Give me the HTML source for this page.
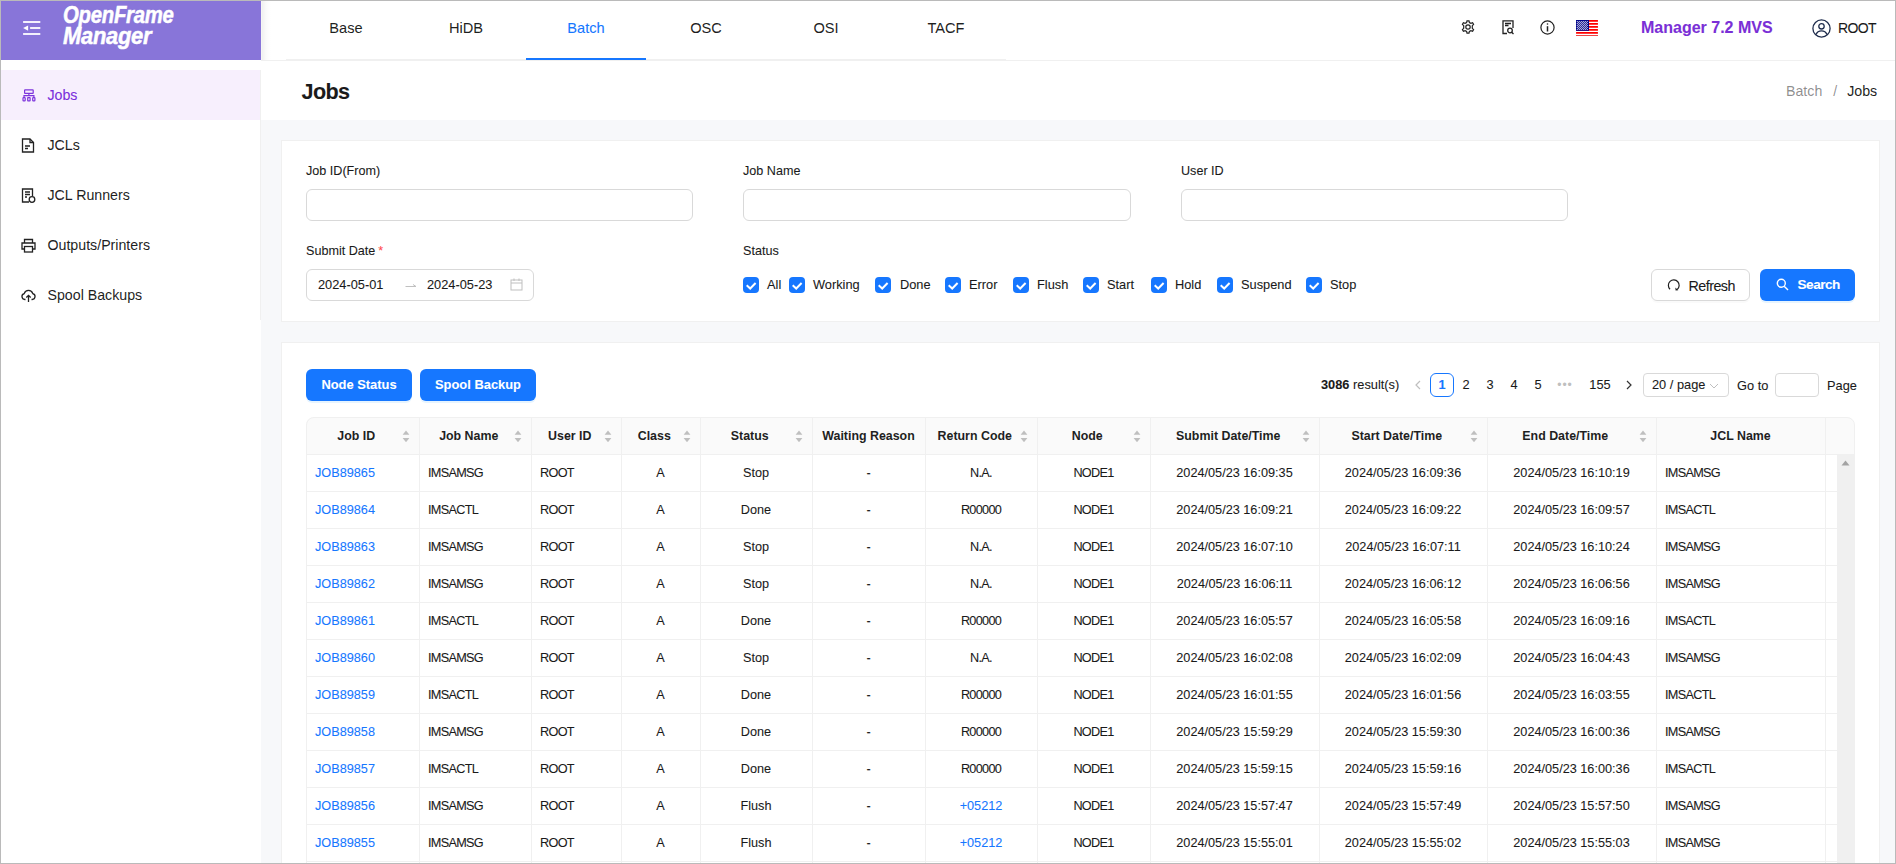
<!DOCTYPE html>
<html><head><meta charset="utf-8">
<style>
*{box-sizing:border-box;margin:0;padding:0}
html,body{width:1896px;height:864px;overflow:hidden;background:#fff}
body{position:relative;font-family:"Liberation Sans",sans-serif;color:#1a1a1a;-webkit-text-stroke:0.08px currentColor}
.abs{position:absolute}
.logo{color:#fff;font-weight:bold;font-style:italic;font-size:23.5px;line-height:24px;transform-origin:0 0;letter-spacing:-0.3px;-webkit-text-stroke:0.5px #fff;white-space:nowrap}
#frame{position:absolute;left:0;top:0;width:1896px;height:864px;border:1px solid #bababa;pointer-events:none;z-index:100}
#logo{position:absolute;left:1px;top:1px;width:260px;height:59px;background:#8875d9}
#side{position:absolute;left:1px;top:60px;width:260px;height:804px;background:#fff}
#sideb{position:absolute;left:260px;top:70px;width:1px;height:250px;background:#f0f0f0}
.mi{position:absolute;left:0;width:259px;height:50px;font-size:14.2px;line-height:50px;color:rgba(0,0,0,0.88)}
.mi span{position:absolute;left:46.5px;top:0}
.mi svg{position:absolute;left:20px;top:18px}
.mi.sel{background:#f7effd;color:#7a2edb}
#hdr{position:absolute;left:261px;top:1px;width:1634px;height:60px;background:#fff;border-bottom:1px solid #f0f0f0}
.tab{position:absolute;top:0;width:120px;height:58px;line-height:54px;text-align:center;font-size:14.6px;color:rgba(0,0,0,0.88)}
.tab.act{color:#1677ff}
#title{position:absolute;left:261px;top:61px;width:1634px;height:59px;background:#fff}
#main{position:absolute;left:261px;top:120px;width:1634px;height:743px;background:#f7f8fa}
.card{position:absolute;left:281px;width:1599px;background:#fff;border:1px solid #f0f0f0}
.lbl{position:absolute;font-size:12.6px;line-height:16px;margin-top:1px}
.inp{position:absolute;height:32px;border:1px solid #d9d9d9;border-radius:6px;background:#fff}
.cb{position:absolute;top:277px;width:16px;height:16px;border-radius:4px;background:#1677ff}
.cb svg{position:absolute;left:0;top:0}
.cbl{position:absolute;top:277px;line-height:16px;font-size:12.8px}
.btn{position:absolute;height:32px;border-radius:6px;font-size:13px;line-height:30px;text-align:center}
.btnp{background:#1677ff;color:#fff;font-weight:bold;box-shadow:0 2px 0 rgba(5,145,255,0.1)}
#tbl{position:absolute;left:306px;top:417px;width:1548px;height:447px;overflow:hidden;border-radius:8px 8px 0 0}
#tblb{position:absolute;left:306px;top:417px;width:1549px;height:460px;border-radius:8px 8px 0 0;border:1px solid #f0f0f0;pointer-events:none}
.thbg{position:absolute;left:0;top:0;width:1548px;height:38px;background:#fafafa;border-bottom:1px solid #f0f0f0}
.th{position:absolute;top:1px;height:36px;line-height:36px;text-align:center;font-weight:bold;font-size:12.4px;color:rgba(0,0,0,0.88)}
.sort{position:absolute;top:13px}
.vl{position:absolute;top:0;width:1px;height:447px;background:#f0f0f0}
.hl{position:absolute;left:0;width:1531px;height:1px;background:#f0f0f0}
.td{position:absolute;height:36px;line-height:36px;font-size:12.7px;white-space:nowrap;padding:0 9px}
.td.c{text-align:center;padding:0}
.link{color:#1677ff}
.nm{letter-spacing:-0.7px}
</style></head><body>
<div id="frame"></div>
<div id="logo">
  <svg class="abs" style="left:22px;top:20px" width="18" height="15" viewBox="0 0 18 15"><rect x="0.1" y="0.1" width="17.2" height="1.8" fill="#fff"/><rect x="7.1" y="6.1" width="10.2" height="1.8" fill="#fff"/><rect x="0.1" y="12.1" width="17.2" height="1.8" fill="#fff"/><path d="M0.1 7.1L5.1 4.6V9.8Z" fill="#fff"/></svg>
  <div class="abs logo" style="left:61.5px;top:1.5px;transform:scaleX(0.865)">OpenFrame</div><div class="abs logo" style="left:61.5px;top:23px;transform:scaleX(0.933)">Manager</div>
</div>
<div id="side">
  <div class="mi sel" style="top:10px"><svg style="left:21px;top:19px" width="14" height="14" viewBox="0 0 14 14" fill="none" stroke="#7d35dc" stroke-width="1.2"><rect x="2.6" y="0.8" width="8.6" height="3.6" rx="0.5"/><path d="M6.9 4.4V6.6M2 8.6V6.6H11.9V8.6"/><rect x="1" y="8.6" width="2.2" height="3.3" rx="0.6"/><rect x="5.7" y="8.6" width="2.4" height="3.3" rx="0.3"/><rect x="10.7" y="8.6" width="2.2" height="3.3" rx="0.6"/></svg><span>Jobs</span></div>
  <div class="mi" style="top:60px"><svg width="14" height="15" viewBox="0 0 14 15" fill="none" stroke="#222" stroke-width="1.3"><path d="M1.5 1H9L12.5 4.5V14H1.5Z"/><path d="M9 1V4.5H12.5M4 8H9M4 10.5H7"/></svg><span>JCLs</span></div>
  <div class="mi" style="top:110px"><svg width="15" height="15" viewBox="0 0 15 15" fill="none" stroke="#222" stroke-width="1.3"><path d="M8 14H1.5V1H11.5V8"/><path d="M4 4H9M4 6.5H9M4 9H6"/><circle cx="11" cy="11.5" r="2.8"/></svg><span>JCL Runners</span></div>
  <div class="mi" style="top:160px"><svg width="15" height="15" viewBox="0 0 15 15" fill="none" stroke="#222" stroke-width="1.3"><path d="M3.5 5V1.5H11.5V5M3.5 11H1V5H14V11H11.5"/><rect x="3.5" y="8.5" width="8" height="5.5"/></svg><span>Outputs/Printers</span></div>
  <div class="mi" style="top:210px"><svg width="15" height="15" viewBox="0 0 15 15" fill="none" stroke="#222" stroke-width="1.3"><path d="M4.5 11.5H3.8A3 3 0 0 1 3.2 5.6A4.5 4.5 0 0 1 11.8 5.6A3 3 0 0 1 11.2 11.5H10.5"/><path d="M7.5 14V7.5M5.3 9.5L7.5 7.3L9.7 9.5"/></svg><span>Spool Backups</span></div>
</div>
<div id="sideb"></div>
<div id="hdr">
  <div class="abs" style="left:25px;top:58px;width:720px;height:1px;background:#f0f0f0"></div>
  <div class="tab" style="left:25px">Base</div>
  <div class="tab" style="left:145px">HiDB</div>
  <div class="tab act" style="left:265px">Batch</div>
  <div class="abs" style="left:265px;top:57px;width:120px;height:2px;background:#1677ff"></div>
  <div class="tab" style="left:385px">OSC</div>
  <div class="tab" style="left:505px">OSI</div>
  <div class="tab" style="left:625px">TACF</div>
  <svg class="abs" style="left:1200px;top:19px" width="14" height="14" viewBox="0 0 14 14" fill="none" stroke="#222" stroke-width="1.2"><circle cx="7" cy="7" r="2.2"/><path d="M6 0.8H8L8.4 2.6L9.9 3.4L11.6 2.7L12.6 4.4L11.3 5.7V8.3L12.6 9.6L11.6 11.3L9.9 10.6L8.4 11.4L8 13.2H6L5.6 11.4L4.1 10.6L2.4 11.3L1.4 9.6L2.7 8.3V5.7L1.4 4.4L2.4 2.7L4.1 3.4L5.6 2.6Z"/></svg>
  <svg class="abs" style="left:1241px;top:19px" width="13" height="15" viewBox="0 0 13 15" fill="none" stroke="#222" stroke-width="1.3"><path d="M5 13.5H1V0.8H11V8"/><path d="M3 3.5H9M3 5.5H6.5"/><circle cx="8" cy="10.5" r="2.3"/><path d="M9.7 12.2L11.5 14"/></svg>
  <svg class="abs" style="left:1279px;top:19px" width="15" height="15" viewBox="0 0 15 15" fill="none" stroke="#222" stroke-width="1.2"><circle cx="7.5" cy="7.5" r="6.6"/><path d="M7.5 6.2V11.5" stroke-width="1.5"/><circle cx="7.5" cy="4" r="0.8" fill="#222" stroke="none"/></svg>
  <svg class="abs" style="left:1315px;top:19px" width="22" height="16" viewBox="0 0 22 16"><rect width="22" height="16" fill="#fff"/><g fill="#f00"><rect y="0.1" width="22" height="1.75" rx="0.5"/><rect y="3.1" width="22" height="1.75" rx="0.5"/><rect y="6.1" width="22" height="1.75" rx="0.5"/><rect y="9.1" width="22" height="1.75" rx="0.5"/><rect y="12.1" width="22" height="1.75" rx="0.5"/><rect y="15" width="22" height="1" fill="#e44"/></g><rect width="13" height="10.8" fill="#00048a"/><g fill="#fff" opacity="0.9"><circle cx="1.3" cy="1.5" r="0.6"/><circle cx="1.3" cy="3.5" r="0.6"/><circle cx="1.3" cy="5.5" r="0.6"/><circle cx="1.3" cy="7.5" r="0.6"/><circle cx="1.3" cy="9.5" r="0.6"/><circle cx="3.3" cy="1.5" r="0.6"/><circle cx="3.3" cy="3.5" r="0.6"/><circle cx="3.3" cy="5.5" r="0.6"/><circle cx="3.3" cy="7.5" r="0.6"/><circle cx="3.3" cy="9.5" r="0.6"/><circle cx="5.3" cy="1.5" r="0.6"/><circle cx="5.3" cy="3.5" r="0.6"/><circle cx="5.3" cy="5.5" r="0.6"/><circle cx="5.3" cy="7.5" r="0.6"/><circle cx="5.3" cy="9.5" r="0.6"/><circle cx="7.3" cy="1.5" r="0.6"/><circle cx="7.3" cy="3.5" r="0.6"/><circle cx="7.3" cy="5.5" r="0.6"/><circle cx="7.3" cy="7.5" r="0.6"/><circle cx="7.3" cy="9.5" r="0.6"/><circle cx="9.3" cy="1.5" r="0.6"/><circle cx="9.3" cy="3.5" r="0.6"/><circle cx="9.3" cy="5.5" r="0.6"/><circle cx="9.3" cy="7.5" r="0.6"/><circle cx="9.3" cy="9.5" r="0.6"/><circle cx="11.3" cy="1.5" r="0.6"/><circle cx="11.3" cy="3.5" r="0.6"/><circle cx="11.3" cy="5.5" r="0.6"/><circle cx="11.3" cy="7.5" r="0.6"/><circle cx="11.3" cy="9.5" r="0.6"/><circle cx="2.3" cy="2.5" r="0.6"/><circle cx="2.3" cy="4.5" r="0.6"/><circle cx="2.3" cy="6.5" r="0.6"/><circle cx="2.3" cy="8.5" r="0.6"/><circle cx="4.3" cy="2.5" r="0.6"/><circle cx="4.3" cy="4.5" r="0.6"/><circle cx="4.3" cy="6.5" r="0.6"/><circle cx="4.3" cy="8.5" r="0.6"/><circle cx="6.3" cy="2.5" r="0.6"/><circle cx="6.3" cy="4.5" r="0.6"/><circle cx="6.3" cy="6.5" r="0.6"/><circle cx="6.3" cy="8.5" r="0.6"/><circle cx="8.3" cy="2.5" r="0.6"/><circle cx="8.3" cy="4.5" r="0.6"/><circle cx="8.3" cy="6.5" r="0.6"/><circle cx="8.3" cy="8.5" r="0.6"/><circle cx="10.3" cy="2.5" r="0.6"/><circle cx="10.3" cy="4.5" r="0.6"/><circle cx="10.3" cy="6.5" r="0.6"/><circle cx="10.3" cy="8.5" r="0.6"/></g></svg>
  <div class="abs" style="left:1380px;top:17px;font-size:16px;line-height:20px;font-weight:bold;color:#7a2fd6">Manager 7.2 MVS</div>
  <svg class="abs" style="left:1551px;top:18px" width="19" height="19" viewBox="0 0 19 19" fill="none" stroke="#1f2d4d" stroke-width="1.3"><circle cx="9.5" cy="9.5" r="8.6"/><circle cx="9.5" cy="7.3" r="2.7"/><path d="M4 15.6C5 13 7 11.8 9.5 11.8C12 11.8 14 13 15 15.6"/></svg>
  <div class="abs" style="left:1577px;top:18px;font-size:14px;line-height:18px;letter-spacing:-0.6px">ROOT</div>
</div>
<div class="abs" style="left:261px;top:1px;width:10px;height:59px;background:linear-gradient(90deg,rgba(200,200,190,0.15) 0px,rgba(0,0,0,0.055) 1.5px,rgba(0,0,0,0.02) 5px,rgba(0,0,0,0) 10px)"></div>
<div id="title">
  <div class="abs" style="left:40.5px;top:17.5px;font-size:21.6px;line-height:26px;font-weight:bold;letter-spacing:-0.6px">Jobs</div>
  <div class="abs" style="left:1525px;top:21px;font-size:14.2px;line-height:18px;color:rgba(0,0,0,0.45)">Batch<span style="margin:0 10px 0 11px">/</span><span style="color:rgba(0,0,0,0.88)">Jobs</span></div>
</div>
<div id="main"></div>
<div class="card" style="top:140px;height:182px"></div>
<div class="card" style="top:342px;height:530px"></div>

<div class="lbl" style="left:306px;top:162px">Job ID(From)</div>
<div class="inp" style="left:306px;top:189px;width:387px"></div>
<div class="lbl" style="left:743px;top:162px">Job Name</div>
<div class="inp" style="left:743px;top:189px;width:388px"></div>
<div class="lbl" style="left:1181px;top:162px">User ID</div>
<div class="inp" style="left:1181px;top:189px;width:387px"></div>
<div class="lbl" style="left:306px;top:242px">Submit Date<span style="color:#ff4d4f;margin-left:3px">*</span></div>
<div class="inp" style="left:306px;top:269px;width:228px">
  <div class="abs" style="left:11px;top:7px;font-size:12.8px;line-height:16px">2024-05-01</div>
  <svg class="abs" style="left:98px;top:11px" width="12" height="8" viewBox="0 0 12 8"><path d="M0.5 5.5H11L8 3.5" stroke="#c0c0c0" fill="none" stroke-width="1"/></svg>
  <div class="abs" style="left:120px;top:7px;font-size:12.8px;line-height:16px">2024-05-23</div>
  <svg class="abs" style="left:203px;top:8px" width="13" height="13" viewBox="0 0 13 13" fill="none" stroke="#bfbfbf" stroke-width="1"><rect x="1" y="2" width="11" height="10"/><path d="M1 5H12M4 0.5V3M9 0.5V3"/></svg>
</div>
<div class="lbl" style="left:743px;top:242px">Status</div>
<div class="cb" style="left:743px"><svg width="16" height="16" viewBox="0 0 16 16"><path d="M3.7 8.2L7.2 11.5L12.6 6" stroke="#fff" stroke-width="2" fill="none"/></svg></div><div class="cbl" style="left:767px">All</div><div class="cb" style="left:789px"><svg width="16" height="16" viewBox="0 0 16 16"><path d="M3.7 8.2L7.2 11.5L12.6 6" stroke="#fff" stroke-width="2" fill="none"/></svg></div><div class="cbl" style="left:813px">Working</div><div class="cb" style="left:875px"><svg width="16" height="16" viewBox="0 0 16 16"><path d="M3.7 8.2L7.2 11.5L12.6 6" stroke="#fff" stroke-width="2" fill="none"/></svg></div><div class="cbl" style="left:900px">Done</div><div class="cb" style="left:945px"><svg width="16" height="16" viewBox="0 0 16 16"><path d="M3.7 8.2L7.2 11.5L12.6 6" stroke="#fff" stroke-width="2" fill="none"/></svg></div><div class="cbl" style="left:969px">Error</div><div class="cb" style="left:1013px"><svg width="16" height="16" viewBox="0 0 16 16"><path d="M3.7 8.2L7.2 11.5L12.6 6" stroke="#fff" stroke-width="2" fill="none"/></svg></div><div class="cbl" style="left:1037px">Flush</div><div class="cb" style="left:1083px"><svg width="16" height="16" viewBox="0 0 16 16"><path d="M3.7 8.2L7.2 11.5L12.6 6" stroke="#fff" stroke-width="2" fill="none"/></svg></div><div class="cbl" style="left:1107px">Start</div><div class="cb" style="left:1151px"><svg width="16" height="16" viewBox="0 0 16 16"><path d="M3.7 8.2L7.2 11.5L12.6 6" stroke="#fff" stroke-width="2" fill="none"/></svg></div><div class="cbl" style="left:1175px">Hold</div><div class="cb" style="left:1217px"><svg width="16" height="16" viewBox="0 0 16 16"><path d="M3.7 8.2L7.2 11.5L12.6 6" stroke="#fff" stroke-width="2" fill="none"/></svg></div><div class="cbl" style="left:1241px">Suspend</div><div class="cb" style="left:1306px"><svg width="16" height="16" viewBox="0 0 16 16"><path d="M3.7 8.2L7.2 11.5L12.6 6" stroke="#fff" stroke-width="2" fill="none"/></svg></div><div class="cbl" style="left:1330px">Stop</div>
<div class="btn" style="left:1651px;top:269px;width:99px;border:1px solid #d9d9d9;box-shadow:0 2px 0 rgba(0,0,0,0.02)"><svg class="abs" style="left:15px;top:9px" width="14" height="14" viewBox="0 0 14 14"><path d="M3 10.2A5.4 5.4 0 1 1 10.2 10.5" fill="none" stroke="#1f1f1f" stroke-width="1.2"/><path d="M8.3 8.4L11.3 11.3L8.6 11.6Z" fill="#1f1f1f"/></svg><span style="position:absolute;left:36.6px;top:0.5px;font-size:14.3px;letter-spacing:-0.55px">Refresh</span></div>
<div class="btn btnp" style="left:1760px;top:269px;width:95px"><svg class="abs" style="left:16px;top:9px" width="13" height="13" viewBox="0 0 13 13" fill="none" stroke="#fff" stroke-width="1.4"><circle cx="5.3" cy="5.3" r="4"/><path d="M8.2 8.2L12 12"/></svg><span style="position:absolute;left:37.5px;top:1px;font-size:13.6px;letter-spacing:-0.5px">Search</span></div>

<div class="btn btnp" style="left:306px;top:369px;width:106px;font-size:12.9px;line-height:32px">Node Status</div>
<div class="btn btnp" style="left:420px;top:369px;width:116px;font-size:12.9px;line-height:32px">Spool Backup</div>

<div class="abs" style="left:1321px;top:377px;font-size:12.8px;line-height:16px"><b>3086</b> result(s)</div>
<svg class="abs" style="left:1414px;top:380px" width="8" height="10" viewBox="0 0 8 10"><path d="M6 1L2 5L6 9" stroke="#bfbfbf" fill="none" stroke-width="1.2"/></svg>
<div class="abs" style="left:1430px;top:373px;width:24px;height:24px;border:1px solid #1677ff;border-radius:6px;color:#1677ff;font-weight:bold;font-size:12.8px;line-height:22px;text-align:center">1</div>
<div class="abs" style="left:1454px;top:373px;width:24px;line-height:24px;font-size:12.8px;text-align:center">2</div>
<div class="abs" style="left:1478px;top:373px;width:24px;line-height:24px;font-size:12.8px;text-align:center">3</div>
<div class="abs" style="left:1502px;top:373px;width:24px;line-height:24px;font-size:12.8px;text-align:center">4</div>
<div class="abs" style="left:1526px;top:373px;width:24px;line-height:24px;font-size:12.8px;text-align:center">5</div>
<div class="abs" style="left:1553px;top:373px;width:24px;line-height:24px;font-size:12px;text-align:center;color:#bfbfbf;letter-spacing:1px">•••</div>
<div class="abs" style="left:1586px;top:373px;width:28px;line-height:24px;font-size:12.8px;text-align:center">155</div>
<svg class="abs" style="left:1625px;top:380px" width="8" height="10" viewBox="0 0 8 10"><path d="M2 1L6 5L2 9" stroke="#333" fill="none" stroke-width="1.2"/></svg>
<div class="abs" style="left:1643px;top:373px;width:86px;height:24px;border:1px solid #d9d9d9;border-radius:4px;background:#fff"><span style="position:absolute;left:8px;top:3px;font-size:12.8px;line-height:16px">20 / page</span><svg class="abs" style="left:65px;top:8px" width="10" height="8" viewBox="0 0 10 8"><path d="M1 2L5 6L9 2" stroke="#bfbfbf" fill="none" stroke-width="1"/></svg></div>
<div class="abs" style="left:1737px;top:378px;font-size:12.8px;line-height:16px">Go to</div>
<div class="abs" style="left:1775px;top:373px;width:44px;height:24px;border:1px solid #d9d9d9;border-radius:4px"></div>
<div class="abs" style="left:1827px;top:378px;font-size:12.8px;line-height:16px">Page</div>

<div id="tbl">
  <div class="thbg"></div>
  <div class="th" style="left:0px;width:100.5px">Job ID</div><svg class="sort" style="left:95.5px" width="8" height="13" viewBox="0 0 8 13"><path d="M4 0.6L7.4 4.8H0.6Z" fill="#bfbfbf"/><path d="M4 12.2L7.4 8H0.6Z" fill="#bfbfbf"/></svg><div class="th" style="left:113px;width:99.5px">Job Name</div><svg class="sort" style="left:207.5px" width="8" height="13" viewBox="0 0 8 13"><path d="M4 0.6L7.4 4.8H0.6Z" fill="#bfbfbf"/><path d="M4 12.2L7.4 8H0.6Z" fill="#bfbfbf"/></svg><div class="th" style="left:225px;width:77.5px">User ID</div><svg class="sort" style="left:297.5px" width="8" height="13" viewBox="0 0 8 13"><path d="M4 0.6L7.4 4.8H0.6Z" fill="#bfbfbf"/><path d="M4 12.2L7.4 8H0.6Z" fill="#bfbfbf"/></svg><div class="th" style="left:315px;width:66.5px">Class</div><svg class="sort" style="left:376.5px" width="8" height="13" viewBox="0 0 8 13"><path d="M4 0.6L7.4 4.8H0.6Z" fill="#bfbfbf"/><path d="M4 12.2L7.4 8H0.6Z" fill="#bfbfbf"/></svg><div class="th" style="left:394px;width:99.5px">Status</div><svg class="sort" style="left:488.5px" width="8" height="13" viewBox="0 0 8 13"><path d="M4 0.6L7.4 4.8H0.6Z" fill="#bfbfbf"/><path d="M4 12.2L7.4 8H0.6Z" fill="#bfbfbf"/></svg><div class="th" style="left:506px;width:113px">Waiting Reason</div><div class="th" style="left:619px;width:99.5px">Return Code</div><svg class="sort" style="left:713.5px" width="8" height="13" viewBox="0 0 8 13"><path d="M4 0.6L7.4 4.8H0.6Z" fill="#bfbfbf"/><path d="M4 12.2L7.4 8H0.6Z" fill="#bfbfbf"/></svg><div class="th" style="left:731px;width:100.5px">Node</div><svg class="sort" style="left:826.5px" width="8" height="13" viewBox="0 0 8 13"><path d="M4 0.6L7.4 4.8H0.6Z" fill="#bfbfbf"/><path d="M4 12.2L7.4 8H0.6Z" fill="#bfbfbf"/></svg><div class="th" style="left:844px;width:156.5px">Submit Date/Time</div><svg class="sort" style="left:995.5px" width="8" height="13" viewBox="0 0 8 13"><path d="M4 0.6L7.4 4.8H0.6Z" fill="#bfbfbf"/><path d="M4 12.2L7.4 8H0.6Z" fill="#bfbfbf"/></svg><div class="th" style="left:1013px;width:155.5px">Start Date/Time</div><svg class="sort" style="left:1163.5px" width="8" height="13" viewBox="0 0 8 13"><path d="M4 0.6L7.4 4.8H0.6Z" fill="#bfbfbf"/><path d="M4 12.2L7.4 8H0.6Z" fill="#bfbfbf"/></svg><div class="th" style="left:1181px;width:156.5px">End Date/Time</div><svg class="sort" style="left:1332.5px" width="8" height="13" viewBox="0 0 8 13"><path d="M4 0.6L7.4 4.8H0.6Z" fill="#bfbfbf"/><path d="M4 12.2L7.4 8H0.6Z" fill="#bfbfbf"/></svg><div class="th" style="left:1350px;width:169px">JCL Name</div>
  <div class="vl" style="left:113px"></div><div class="vl" style="left:225px"></div><div class="vl" style="left:315px"></div><div class="vl" style="left:394px"></div><div class="vl" style="left:506px"></div><div class="vl" style="left:619px"></div><div class="vl" style="left:731px"></div><div class="vl" style="left:844px"></div><div class="vl" style="left:1013px"></div><div class="vl" style="left:1181px"></div><div class="vl" style="left:1350px"></div><div class="vl" style="left:1519px"></div>
  <div class="td l link" style="left:0px;width:113px;top:38px">JOB89865</div><div class="td l nm" style="left:113px;width:112px;top:38px">IMSAMSG</div><div class="td l nm" style="left:225px;width:90px;top:38px">ROOT</div><div class="td c " style="left:315px;width:79px;top:38px">A</div><div class="td c " style="left:394px;width:112px;top:38px">Stop</div><div class="td c " style="left:506px;width:113px;top:38px">-</div><div class="td c nm" style="left:619px;width:112px;top:38px">N.A.</div><div class="td c nm" style="left:731px;width:113px;top:38px">NODE1</div><div class="td c " style="left:844px;width:169px;top:38px">2024/05/23 16:09:35</div><div class="td c " style="left:1013px;width:168px;top:38px">2024/05/23 16:09:36</div><div class="td c " style="left:1181px;width:169px;top:38px">2024/05/23 16:10:19</div><div class="td l nm" style="left:1350px;width:169px;top:38px">IMSAMSG</div><div class="hl" style="top:74px"></div><div class="td l link" style="left:0px;width:113px;top:75px">JOB89864</div><div class="td l nm" style="left:113px;width:112px;top:75px">IMSACTL</div><div class="td l nm" style="left:225px;width:90px;top:75px">ROOT</div><div class="td c " style="left:315px;width:79px;top:75px">A</div><div class="td c " style="left:394px;width:112px;top:75px">Done</div><div class="td c " style="left:506px;width:113px;top:75px">-</div><div class="td c nm" style="left:619px;width:112px;top:75px">R00000</div><div class="td c nm" style="left:731px;width:113px;top:75px">NODE1</div><div class="td c " style="left:844px;width:169px;top:75px">2024/05/23 16:09:21</div><div class="td c " style="left:1013px;width:168px;top:75px">2024/05/23 16:09:22</div><div class="td c " style="left:1181px;width:169px;top:75px">2024/05/23 16:09:57</div><div class="td l nm" style="left:1350px;width:169px;top:75px">IMSACTL</div><div class="hl" style="top:111px"></div><div class="td l link" style="left:0px;width:113px;top:112px">JOB89863</div><div class="td l nm" style="left:113px;width:112px;top:112px">IMSAMSG</div><div class="td l nm" style="left:225px;width:90px;top:112px">ROOT</div><div class="td c " style="left:315px;width:79px;top:112px">A</div><div class="td c " style="left:394px;width:112px;top:112px">Stop</div><div class="td c " style="left:506px;width:113px;top:112px">-</div><div class="td c nm" style="left:619px;width:112px;top:112px">N.A.</div><div class="td c nm" style="left:731px;width:113px;top:112px">NODE1</div><div class="td c " style="left:844px;width:169px;top:112px">2024/05/23 16:07:10</div><div class="td c " style="left:1013px;width:168px;top:112px">2024/05/23 16:07:11</div><div class="td c " style="left:1181px;width:169px;top:112px">2024/05/23 16:10:24</div><div class="td l nm" style="left:1350px;width:169px;top:112px">IMSAMSG</div><div class="hl" style="top:148px"></div><div class="td l link" style="left:0px;width:113px;top:149px">JOB89862</div><div class="td l nm" style="left:113px;width:112px;top:149px">IMSAMSG</div><div class="td l nm" style="left:225px;width:90px;top:149px">ROOT</div><div class="td c " style="left:315px;width:79px;top:149px">A</div><div class="td c " style="left:394px;width:112px;top:149px">Stop</div><div class="td c " style="left:506px;width:113px;top:149px">-</div><div class="td c nm" style="left:619px;width:112px;top:149px">N.A.</div><div class="td c nm" style="left:731px;width:113px;top:149px">NODE1</div><div class="td c " style="left:844px;width:169px;top:149px">2024/05/23 16:06:11</div><div class="td c " style="left:1013px;width:168px;top:149px">2024/05/23 16:06:12</div><div class="td c " style="left:1181px;width:169px;top:149px">2024/05/23 16:06:56</div><div class="td l nm" style="left:1350px;width:169px;top:149px">IMSAMSG</div><div class="hl" style="top:185px"></div><div class="td l link" style="left:0px;width:113px;top:186px">JOB89861</div><div class="td l nm" style="left:113px;width:112px;top:186px">IMSACTL</div><div class="td l nm" style="left:225px;width:90px;top:186px">ROOT</div><div class="td c " style="left:315px;width:79px;top:186px">A</div><div class="td c " style="left:394px;width:112px;top:186px">Done</div><div class="td c " style="left:506px;width:113px;top:186px">-</div><div class="td c nm" style="left:619px;width:112px;top:186px">R00000</div><div class="td c nm" style="left:731px;width:113px;top:186px">NODE1</div><div class="td c " style="left:844px;width:169px;top:186px">2024/05/23 16:05:57</div><div class="td c " style="left:1013px;width:168px;top:186px">2024/05/23 16:05:58</div><div class="td c " style="left:1181px;width:169px;top:186px">2024/05/23 16:09:16</div><div class="td l nm" style="left:1350px;width:169px;top:186px">IMSACTL</div><div class="hl" style="top:222px"></div><div class="td l link" style="left:0px;width:113px;top:223px">JOB89860</div><div class="td l nm" style="left:113px;width:112px;top:223px">IMSAMSG</div><div class="td l nm" style="left:225px;width:90px;top:223px">ROOT</div><div class="td c " style="left:315px;width:79px;top:223px">A</div><div class="td c " style="left:394px;width:112px;top:223px">Stop</div><div class="td c " style="left:506px;width:113px;top:223px">-</div><div class="td c nm" style="left:619px;width:112px;top:223px">N.A.</div><div class="td c nm" style="left:731px;width:113px;top:223px">NODE1</div><div class="td c " style="left:844px;width:169px;top:223px">2024/05/23 16:02:08</div><div class="td c " style="left:1013px;width:168px;top:223px">2024/05/23 16:02:09</div><div class="td c " style="left:1181px;width:169px;top:223px">2024/05/23 16:04:43</div><div class="td l nm" style="left:1350px;width:169px;top:223px">IMSAMSG</div><div class="hl" style="top:259px"></div><div class="td l link" style="left:0px;width:113px;top:260px">JOB89859</div><div class="td l nm" style="left:113px;width:112px;top:260px">IMSACTL</div><div class="td l nm" style="left:225px;width:90px;top:260px">ROOT</div><div class="td c " style="left:315px;width:79px;top:260px">A</div><div class="td c " style="left:394px;width:112px;top:260px">Done</div><div class="td c " style="left:506px;width:113px;top:260px">-</div><div class="td c nm" style="left:619px;width:112px;top:260px">R00000</div><div class="td c nm" style="left:731px;width:113px;top:260px">NODE1</div><div class="td c " style="left:844px;width:169px;top:260px">2024/05/23 16:01:55</div><div class="td c " style="left:1013px;width:168px;top:260px">2024/05/23 16:01:56</div><div class="td c " style="left:1181px;width:169px;top:260px">2024/05/23 16:03:55</div><div class="td l nm" style="left:1350px;width:169px;top:260px">IMSACTL</div><div class="hl" style="top:296px"></div><div class="td l link" style="left:0px;width:113px;top:297px">JOB89858</div><div class="td l nm" style="left:113px;width:112px;top:297px">IMSAMSG</div><div class="td l nm" style="left:225px;width:90px;top:297px">ROOT</div><div class="td c " style="left:315px;width:79px;top:297px">A</div><div class="td c " style="left:394px;width:112px;top:297px">Done</div><div class="td c " style="left:506px;width:113px;top:297px">-</div><div class="td c nm" style="left:619px;width:112px;top:297px">R00000</div><div class="td c nm" style="left:731px;width:113px;top:297px">NODE1</div><div class="td c " style="left:844px;width:169px;top:297px">2024/05/23 15:59:29</div><div class="td c " style="left:1013px;width:168px;top:297px">2024/05/23 15:59:30</div><div class="td c " style="left:1181px;width:169px;top:297px">2024/05/23 16:00:36</div><div class="td l nm" style="left:1350px;width:169px;top:297px">IMSAMSG</div><div class="hl" style="top:333px"></div><div class="td l link" style="left:0px;width:113px;top:334px">JOB89857</div><div class="td l nm" style="left:113px;width:112px;top:334px">IMSACTL</div><div class="td l nm" style="left:225px;width:90px;top:334px">ROOT</div><div class="td c " style="left:315px;width:79px;top:334px">A</div><div class="td c " style="left:394px;width:112px;top:334px">Done</div><div class="td c " style="left:506px;width:113px;top:334px">-</div><div class="td c nm" style="left:619px;width:112px;top:334px">R00000</div><div class="td c nm" style="left:731px;width:113px;top:334px">NODE1</div><div class="td c " style="left:844px;width:169px;top:334px">2024/05/23 15:59:15</div><div class="td c " style="left:1013px;width:168px;top:334px">2024/05/23 15:59:16</div><div class="td c " style="left:1181px;width:169px;top:334px">2024/05/23 16:00:36</div><div class="td l nm" style="left:1350px;width:169px;top:334px">IMSACTL</div><div class="hl" style="top:370px"></div><div class="td l link" style="left:0px;width:113px;top:371px">JOB89856</div><div class="td l nm" style="left:113px;width:112px;top:371px">IMSAMSG</div><div class="td l nm" style="left:225px;width:90px;top:371px">ROOT</div><div class="td c " style="left:315px;width:79px;top:371px">A</div><div class="td c " style="left:394px;width:112px;top:371px">Flush</div><div class="td c " style="left:506px;width:113px;top:371px">-</div><div class="td c link" style="left:619px;width:112px;top:371px">+05212</div><div class="td c nm" style="left:731px;width:113px;top:371px">NODE1</div><div class="td c " style="left:844px;width:169px;top:371px">2024/05/23 15:57:47</div><div class="td c " style="left:1013px;width:168px;top:371px">2024/05/23 15:57:49</div><div class="td c " style="left:1181px;width:169px;top:371px">2024/05/23 15:57:50</div><div class="td l nm" style="left:1350px;width:169px;top:371px">IMSAMSG</div><div class="hl" style="top:407px"></div><div class="td l link" style="left:0px;width:113px;top:408px">JOB89855</div><div class="td l nm" style="left:113px;width:112px;top:408px">IMSAMSG</div><div class="td l nm" style="left:225px;width:90px;top:408px">ROOT</div><div class="td c " style="left:315px;width:79px;top:408px">A</div><div class="td c " style="left:394px;width:112px;top:408px">Flush</div><div class="td c " style="left:506px;width:113px;top:408px">-</div><div class="td c link" style="left:619px;width:112px;top:408px">+05212</div><div class="td c nm" style="left:731px;width:113px;top:408px">NODE1</div><div class="td c " style="left:844px;width:169px;top:408px">2024/05/23 15:55:01</div><div class="td c " style="left:1013px;width:168px;top:408px">2024/05/23 15:55:02</div><div class="td c " style="left:1181px;width:169px;top:408px">2024/05/23 15:55:03</div><div class="td l nm" style="left:1350px;width:169px;top:408px">IMSAMSG</div><div class="hl" style="top:444px"></div>
  <div class="abs" style="left:1531px;top:38px;width:17px;height:409px;background:#f0f0f0"></div>
  <svg class="abs" style="left:1535px;top:43px" width="9" height="6" viewBox="0 0 9 6"><path d="M4.5 0.5L8.5 5.5H0.5Z" fill="#a3a3a3"/></svg>
</div>
<div id="tblb"></div>
</body></html>
